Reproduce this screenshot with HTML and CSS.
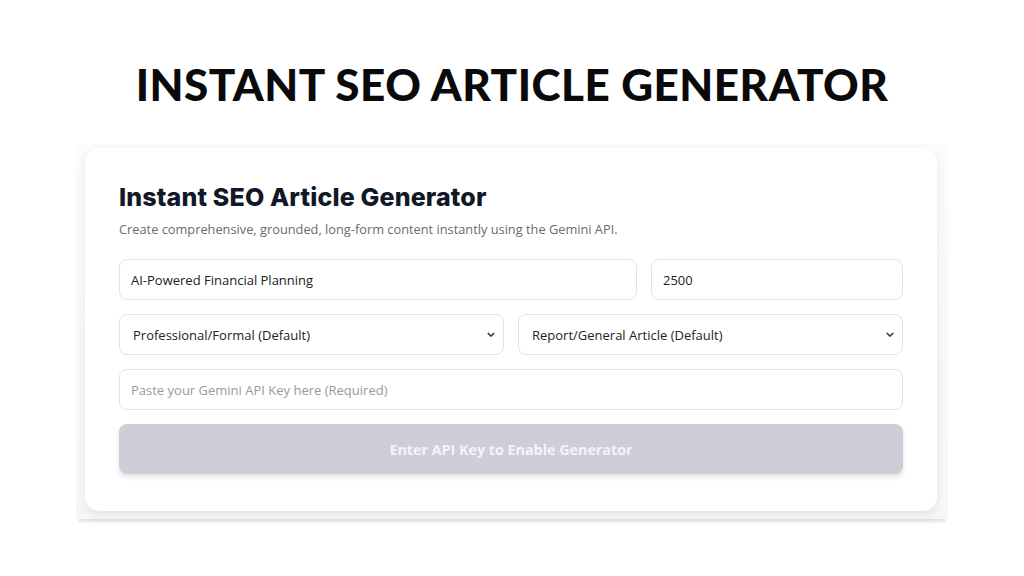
FILE: index.html
```html
<!DOCTYPE html>
<html>
<head>
<meta charset="utf-8">
<link rel="stylesheet" href="styles.css">
</head>
<body>
<div class="page">
  <h1 class="banner">INSTANT SEO ARTICLE GENERATOR</h1>
  <div class="frame">
    <div class="card">
      <h2 class="card-title">Instant SEO Article Generator</h2>
      <p class="card-sub">Create comprehensive, grounded, long-form content instantly using the Gemini API.</p>
      <div class="row row-a">
        <div class="field"><span class="val">AI-Powered Financial Planning</span></div>
        <div class="field"><span class="val">2500</span></div>
      </div>
      <div class="row row-b">
        <div class="field select"><span class="val">Professional/Formal (Default)</span><svg class="chev" viewBox="0 0 10 6" width="8" height="5"><path d="M1 1l4 4 4-4" fill="none" stroke="#333" stroke-width="1.8"/></svg></div>
        <div class="field select"><span class="val">Report/General Article (Default)</span><svg class="chev" viewBox="0 0 10 6" width="8" height="5"><path d="M1 1l4 4 4-4" fill="none" stroke="#333" stroke-width="1.8"/></svg></div>
      </div>
      <div class="field full"><span class="ph">Paste your Gemini API Key here (Required)</span></div>
      <div class="btn">Enter API Key to Enable Generator</div>
    </div>
  </div>
</div>
</body>
</html>
```
FILE: styles.css
```css
html, body { margin: 0; padding: 0; background: #fff; }
.page { width: 1024px; height: 576px; display: flex; flex-direction: column; align-items: center; }
.banner {
  margin: 58px 0 0 0;
  font-family: Lato, "Liberation Sans", sans-serif;
  font-weight: 900;
  font-size: 44px;
  line-height: 52px;
  letter-spacing: 0.5px;
  color: #0a0a0a;
}
.frame {
  margin-top: 34px;
  padding: 4px 11px 8px 9px;
  background: linear-gradient(#fbfbfb, #f6f6f6);
  border-radius: 4px;
  box-shadow: 0 5px 3px -2px #e2e2e2;
}
.card {
  width: 784px;
  padding: 34px 34px 37px 34px;
  background: #fff;
  border-radius: 14px;
  box-shadow: 0 4px 10px rgba(0,0,0,0.07);
  display: flex;
  flex-direction: column;
  font-family: "Open Sans", "Noto Sans", sans-serif;
}
.card-title {
  margin: 0;
  font-family: Inter, "Liberation Sans", sans-serif;
  font-weight: 800;
  font-size: 25px;
  line-height: 30px;
  letter-spacing: 0.15px;
  color: #111827;
}
.card-sub {
  margin: 8px 0 21px 0;
  font-size: 12.8px;
  line-height: 18px;
  color: #6b6b6b;
}
.row { display: grid; gap: 14px; margin-bottom: 14px; }
.row-a { grid-template-columns: 518px 1fr; }
.row-b { grid-template-columns: 1fr 1fr; }
.field {
  height: 41px;
  box-sizing: border-box;
  border: 1px solid #e3e3e3;
  border-radius: 8px;
  display: flex;
  align-items: center;
  padding: 0 11px;
  font-size: 13px;
  color: #222;
  background: #fff;
}
.select { padding: 0 8px 0 13px; justify-content: space-between; }
.full { margin-bottom: 14px; }
.ph { color: #9a9a9a; }
.btn {
  height: 50px;
  border-radius: 8px;
  background: #cfced8;
  color: #f4f4f8;
  font-family: "Open Sans", "Noto Sans", sans-serif;
  font-weight: 700;
  font-size: 14.3px;
  display: flex;
  align-items: center;
  justify-content: center;
  box-shadow: 0 3px 5px rgba(0,0,0,0.12);
}
```
